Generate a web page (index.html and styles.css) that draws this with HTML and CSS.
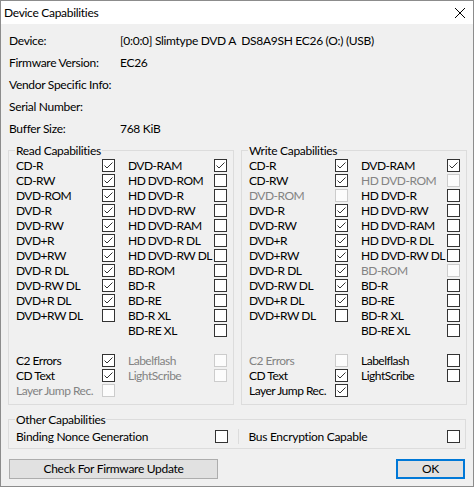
FILE: index.html
```html
<!DOCTYPE html>
<html>
<head>
<meta charset="utf-8">
<link rel="stylesheet" href="styles.css">
</head>
<body>
<div class="window">
  <div class="titlebar">
    <span class="title">Device Capabilities</span>
    <svg class="close" width="12" height="12" viewBox="0 0 12 12"><path d="M1 1 L11 11 M11 1 L1 11" stroke="#000" stroke-width="1" fill="none"/></svg>
  </div>
  <div class="content">
    <div class="info">
      <div class="info-row"><span class="k">Device:</span><span class="v">[0:0:0] Slimtype DVD A  DS8A9SH EC26 (O:) (USB)</span></div>
      <div class="info-row"><span class="k">Firmware Version:</span><span class="v">EC26</span></div>
      <div class="info-row"><span class="k">Vendor Specific Info:</span><span class="v"></span></div>
      <div class="info-row"><span class="k">Serial Number:</span><span class="v"></span></div>
      <div class="info-row"><span class="k">Buffer Size:</span><span class="v">768 KiB</span></div>
    </div>

    <div class="groups">
      <fieldset class="group">
        <legend>Read Capabilities</legend>
        <div class="caps">
          <div class="cap"><span>CD-R</span><i class="cb on"></i></div>
          <div class="cap"><span>DVD-RAM</span><i class="cb on"></i></div>
          <div class="cap"><span>CD-RW</span><i class="cb on"></i></div>
          <div class="cap"><span>HD DVD-ROM</span><i class="cb"></i></div>
          <div class="cap"><span>DVD-ROM</span><i class="cb on"></i></div>
          <div class="cap"><span>HD DVD-R</span><i class="cb"></i></div>
          <div class="cap"><span>DVD-R</span><i class="cb on"></i></div>
          <div class="cap"><span>HD DVD-RW</span><i class="cb"></i></div>
          <div class="cap"><span>DVD-RW</span><i class="cb on"></i></div>
          <div class="cap"><span>HD DVD-RAM</span><i class="cb"></i></div>
          <div class="cap"><span>DVD+R</span><i class="cb on"></i></div>
          <div class="cap"><span>HD DVD-R DL</span><i class="cb"></i></div>
          <div class="cap"><span>DVD+RW</span><i class="cb on"></i></div>
          <div class="cap"><span>HD DVD-RW DL</span><i class="cb"></i></div>
          <div class="cap"><span>DVD-R DL</span><i class="cb on"></i></div>
          <div class="cap"><span>BD-ROM</span><i class="cb"></i></div>
          <div class="cap"><span>DVD-RW DL</span><i class="cb on"></i></div>
          <div class="cap"><span>BD-R</span><i class="cb"></i></div>
          <div class="cap"><span>DVD+R DL</span><i class="cb on"></i></div>
          <div class="cap"><span>BD-RE</span><i class="cb"></i></div>
          <div class="cap"><span>DVD+RW DL</span><i class="cb"></i></div>
          <div class="cap"><span>BD-R XL</span><i class="cb"></i></div>
          <div class="cap"></div>
          <div class="cap"><span>BD-RE XL</span><i class="cb"></i></div>
          <div class="cap"></div>
          <div class="cap"></div>
          <div class="cap"><span>C2 Errors</span><i class="cb on"></i></div>
          <div class="cap dis"><span>Labelflash</span><i class="cb"></i></div>
          <div class="cap"><span>CD Text</span><i class="cb on"></i></div>
          <div class="cap dis"><span>LightScribe</span><i class="cb"></i></div>
          <div class="cap dis"><span>Layer Jump Rec.</span><i class="cb"></i></div>
          <div class="cap"></div>
        </div>
      </fieldset>

      <fieldset class="group">
        <legend>Write Capabilities</legend>
        <div class="caps">
          <div class="cap"><span>CD-R</span><i class="cb on"></i></div>
          <div class="cap"><span>DVD-RAM</span><i class="cb on"></i></div>
          <div class="cap"><span>CD-RW</span><i class="cb on"></i></div>
          <div class="cap dis"><span>HD DVD-ROM</span><i class="cb"></i></div>
          <div class="cap dis"><span>DVD-ROM</span><i class="cb"></i></div>
          <div class="cap"><span>HD DVD-R</span><i class="cb"></i></div>
          <div class="cap"><span>DVD-R</span><i class="cb on"></i></div>
          <div class="cap"><span>HD DVD-RW</span><i class="cb"></i></div>
          <div class="cap"><span>DVD-RW</span><i class="cb on"></i></div>
          <div class="cap"><span>HD DVD-RAM</span><i class="cb"></i></div>
          <div class="cap"><span>DVD+R</span><i class="cb on"></i></div>
          <div class="cap"><span>HD DVD-R DL</span><i class="cb"></i></div>
          <div class="cap"><span>DVD+RW</span><i class="cb on"></i></div>
          <div class="cap"><span>HD DVD-RW DL</span><i class="cb"></i></div>
          <div class="cap"><span>DVD-R DL</span><i class="cb on"></i></div>
          <div class="cap dis"><span>BD-ROM</span><i class="cb"></i></div>
          <div class="cap"><span>DVD-RW DL</span><i class="cb on"></i></div>
          <div class="cap"><span>BD-R</span><i class="cb"></i></div>
          <div class="cap"><span>DVD+R DL</span><i class="cb on"></i></div>
          <div class="cap"><span>BD-RE</span><i class="cb"></i></div>
          <div class="cap"><span>DVD+RW DL</span><i class="cb"></i></div>
          <div class="cap"><span>BD-R XL</span><i class="cb"></i></div>
          <div class="cap"></div>
          <div class="cap"><span>BD-RE XL</span><i class="cb"></i></div>
          <div class="cap"></div>
          <div class="cap"></div>
          <div class="cap dis"><span>C2 Errors</span><i class="cb"></i></div>
          <div class="cap"><span>Labelflash</span><i class="cb"></i></div>
          <div class="cap"><span>CD Text</span><i class="cb on"></i></div>
          <div class="cap"><span>LightScribe</span><i class="cb"></i></div>
          <div class="cap"><span>Layer Jump Rec.</span><i class="cb on"></i></div>
          <div class="cap"></div>
        </div>
      </fieldset>
    </div>

    <fieldset class="group other">
      <legend>Other Capabilities</legend>
      <div class="other-row">
        <div class="cap"><span>Binding Nonce Generation</span><i class="cb"></i></div>
        <div class="sep"></div>
        <div class="cap"><span>Bus Encryption Capable</span><i class="cb"></i></div>
      </div>
    </fieldset>

    <div class="buttons">
      <button class="btn fw">Check For Firmware Update</button>
      <button class="btn ok">OK</button>
    </div>
  </div>
</div>
</body>
</html>
```

FILE: styles.css
```css
* { box-sizing: border-box; }
html, body { margin: 0; padding: 0; background: #f0f0f0; }
body {
  font-family: Lato, "Noto Sans", sans-serif;
  font-size: 12px;
  letter-spacing: -0.3px;
  color: #000;
}
.window {
  width: 474px;
  height: 487px;
  border: 1px solid #8c8c8c;
  background: #f0f0f0;
  overflow: hidden;
}
.titlebar {
  height: 23px;
  background: #fff;
  display: flex;
  align-items: center;
  justify-content: space-between;
  padding: 0 7px 0 3px;
}
.title { line-height: 23px; }
.close { display: block; }

.content { padding: 5px 7px 0 7px; }

.info { margin-left: 1px; }
.info-row {
  height: 22px;
  display: flex;
  align-items: center;
  white-space: nowrap;
}
.info-row .k { width: 111px; flex: none; }
.info-row .v { white-space: pre; }

.groups {
  display: grid;
  grid-template-columns: 226px 226px;
  column-gap: 7px;
  margin-top: 4px;
}
.group {
  margin: 0;
  border: 1px solid #dcdcdc;
  padding: 0 5px 6px 7px;
  min-width: 0;
}
.group legend {
  padding: 0 1px;
  margin-left: -1px;
  line-height: 15px;
}
.caps {
  display: grid;
  grid-template-columns: 99px 99px;
  grid-auto-rows: 15px;
  column-gap: 13px;
  letter-spacing: -0.5px;
}
.cap {
  display: flex;
  align-items: center;
  justify-content: space-between;
  white-space: nowrap;
}
.cap span { min-width: 0; }
.cap.dis { color: #838383; }

.cb {
  display: block;
  width: 13px;
  height: 13px;
  border: 1px solid #333;
  background: #fff;
  flex: none;
}
.cb.on {
  background: #fff url("data:image/svg+xml,%3Csvg xmlns='http://www.w3.org/2000/svg' width='11' height='11' viewBox='0 0 11 11'%3E%3Cpath d='M1.5 5.5 L4 8 L9.5 2.5' stroke='%23333' stroke-width='1' fill='none'/%3E%3C/svg%3E") no-repeat center;
}
.cap.dis .cb { border-color: #cccccc; background: #fcfcfc; }

.other {
  margin-top: 7px;
  padding: 2px 5px 4px 7px;
}
.other-row {
  display: grid;
  grid-template-columns: 1fr 1px 1fr;
  column-gap: 10px;
  height: 15px;
}
.sep { background: #dcdcdc; }

.buttons {
  display: flex;
  justify-content: space-between;
  margin-top: 10px;
  padding: 0 1px;
}
.btn {
  font-family: inherit;
  font-size: 12px;
  letter-spacing: -0.3px;
  color: #000;
  height: 20px;
  padding: 0;
  margin: 0;
  background: #e1e1e1;
  border: 1px solid #adadad;
  line-height: 16px;
}
.btn.fw { width: 209px; }
.btn.ok {
  width: 69px;
  border: 2px solid #0078d7;
}
```
